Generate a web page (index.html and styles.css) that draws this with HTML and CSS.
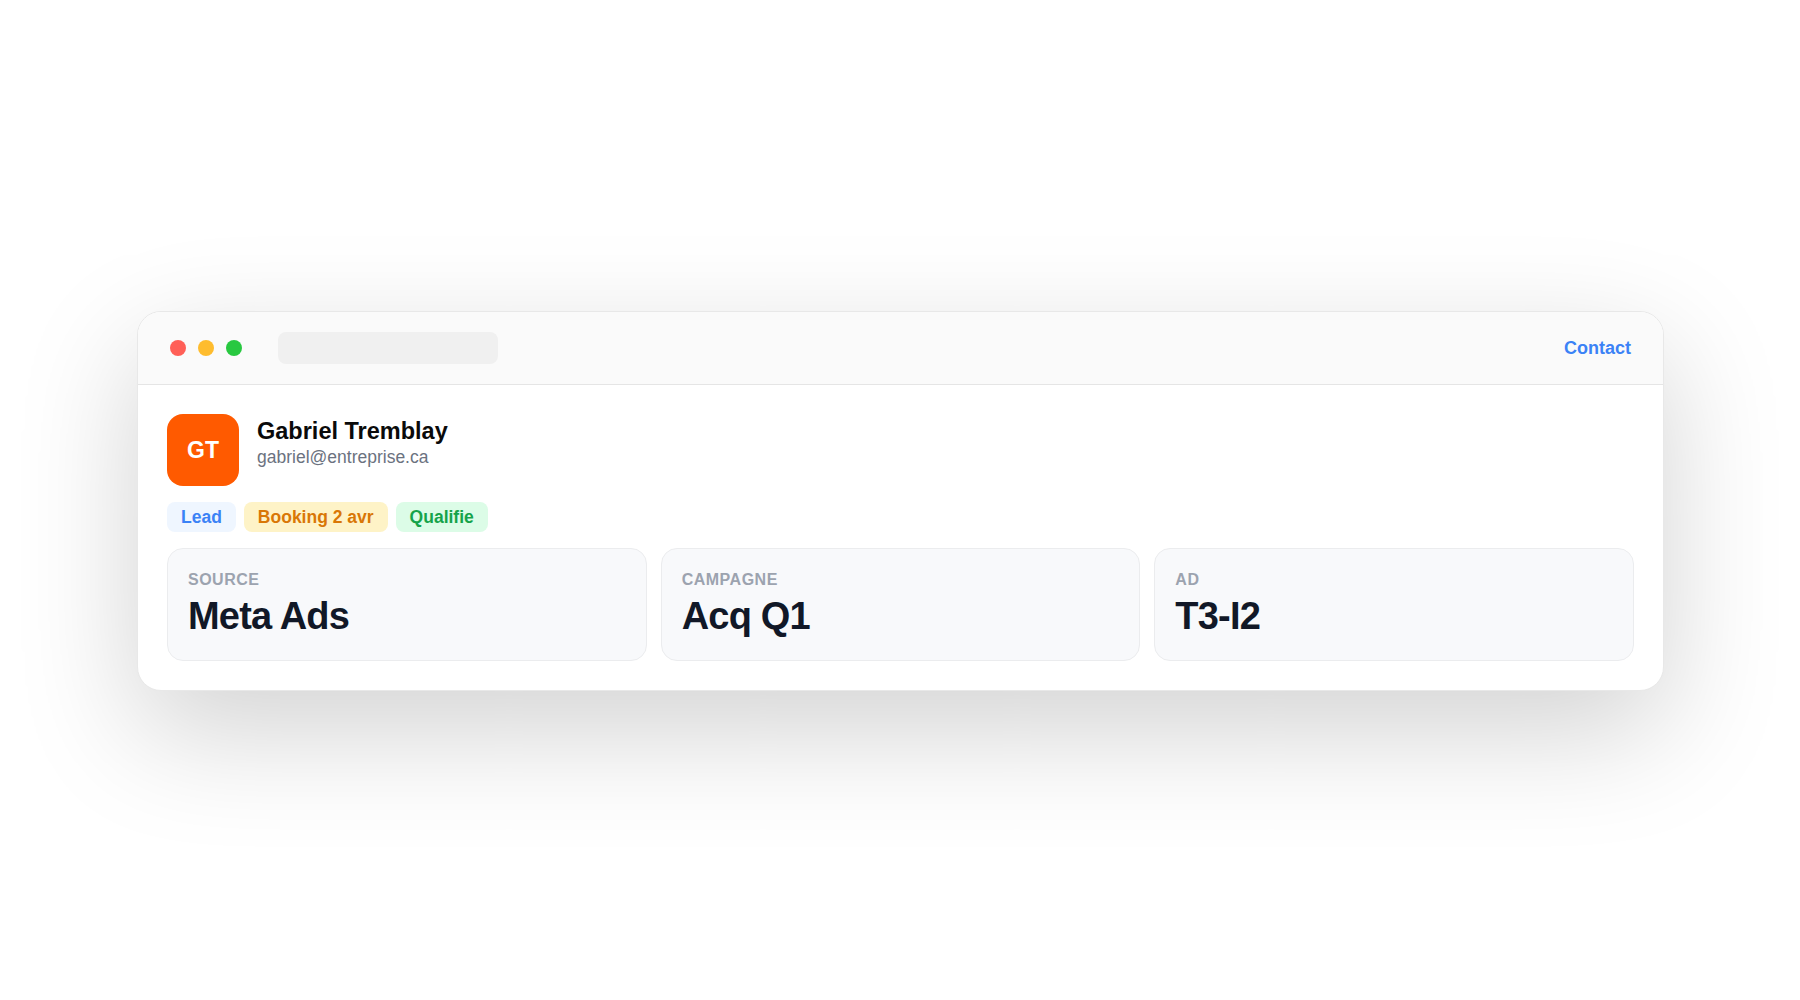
FILE: index.html
```html
<!DOCTYPE html>
<html lang="fr">
<head>
<meta charset="utf-8">
<title>Contact</title>
<link rel="stylesheet" href="styles.css">
</head>
<body>
<div class="stage">
  <div class="window">
    <div class="titlebar">
      <div class="dots">
        <span class="dot dot-red"></span>
        <span class="dot dot-yellow"></span>
        <span class="dot dot-green"></span>
      </div>
      <div class="address"></div>
      <a class="title-link">Contact</a>
    </div>
    <div class="content">
      <div class="person">
        <div class="avatar">GT</div>
        <div class="person-info">
          <div class="person-name">Gabriel Tremblay</div>
          <div class="person-email">gabriel@entreprise.ca</div>
        </div>
      </div>
      <div class="tags">
        <span class="tag tag-blue">Lead</span>
        <span class="tag tag-amber">Booking 2 avr</span>
        <span class="tag tag-green">Qualifie</span>
      </div>
      <div class="stats">
        <div class="stat">
          <div class="stat-label">SOURCE</div>
          <div class="stat-value">Meta Ads</div>
        </div>
        <div class="stat">
          <div class="stat-label">CAMPAGNE</div>
          <div class="stat-value">Acq Q1</div>
        </div>
        <div class="stat">
          <div class="stat-label">AD</div>
          <div class="stat-value">T3-I2</div>
        </div>
      </div>
    </div>
  </div>
</div>
</body>
</html>
```
FILE: styles.css
```css
* { box-sizing: border-box; }

html, body {
  margin: 0;
  padding: 0;
  background: #ffffff;
  font-family: "Liberation Sans", Arial, Helvetica, sans-serif;
}

.stage {
  width: 100%;
  height: 100vh;
  padding: 2px 0 0 1px;
  display: flex;
  align-items: center;
  justify-content: center;
}

.window {
  width: 1527px;
  background: #ffffff;
  border: 1px solid #e8e8e8;
  border-radius: 24px;
  overflow: hidden;
  box-shadow: 0 40px 120px rgba(0, 0, 0, 0.18);
}

.titlebar {
  height: 73px;
  background: #fafafa;
  border-bottom: 1px solid #e5e5e5;
  display: flex;
  align-items: center;
  padding: 0 32px;
}

.dots {
  display: flex;
  gap: 12px;
}

.dot {
  width: 16px;
  height: 16px;
  border-radius: 50%;
  display: block;
}

.dot-red { background: #ff5f57; }
.dot-yellow { background: #febc2e; }
.dot-green { background: #28c840; }

.address {
  width: 220px;
  height: 32px;
  border-radius: 8px;
  background: #f0f0f0;
  margin-left: 36px;
}

.title-link {
  margin-left: auto;
  color: #3b82f6;
  font-weight: 700;
  font-size: 18px;
  line-height: 22px;
}

.content {
  padding: 29px;
}

.person {
  display: flex;
  align-items: flex-start;
  gap: 18px;
}

.avatar {
  width: 72px;
  height: 72px;
  border-radius: 16px;
  background: #ff5a00;
  color: #ffffff;
  font-weight: 700;
  font-size: 23px;
  display: flex;
  align-items: center;
  justify-content: center;
}

.person-info {
  padding-top: 3px;
  display: flex;
  flex-direction: column;
}

.person-name {
  font-size: 23.5px;
  line-height: 28px;
  font-weight: 700;
  color: #0a0a0a;
}

.person-email {
  margin-top: 0;
  font-size: 17.5px;
  line-height: 24px;
  color: #6b7280;
}

.tags {
  display: flex;
  gap: 8px;
  margin-top: 16px;
}

.tag {
  height: 30px;
  line-height: 30px;
  padding: 0 14px;
  border-radius: 8px;
  font-size: 17.5px;
  font-weight: 700;
}

.tag-blue { background: #eff6ff; color: #3b82f6; }
.tag-amber { background: #fef3c7; color: #d97706; }
.tag-green { background: #dcfce7; color: #16a34a; }

.stats {
  margin-top: 16px;
  display: grid;
  grid-template-columns: repeat(3, 1fr);
  gap: 14px;
}

.stat {
  height: 113px;
  background: #f8f9fb;
  border: 1px solid #ebecee;
  border-radius: 16px;
  padding: 21px 20px 0;
}

.stat-label {
  font-size: 16px;
  line-height: 20px;
  font-weight: 700;
  letter-spacing: 0.5px;
  color: #9ca3af;
}

.stat-value {
  margin-top: 4px;
  font-size: 38px;
  line-height: 44px;
  font-weight: 700;
  letter-spacing: -0.8px;
  color: #111827;
}
```
